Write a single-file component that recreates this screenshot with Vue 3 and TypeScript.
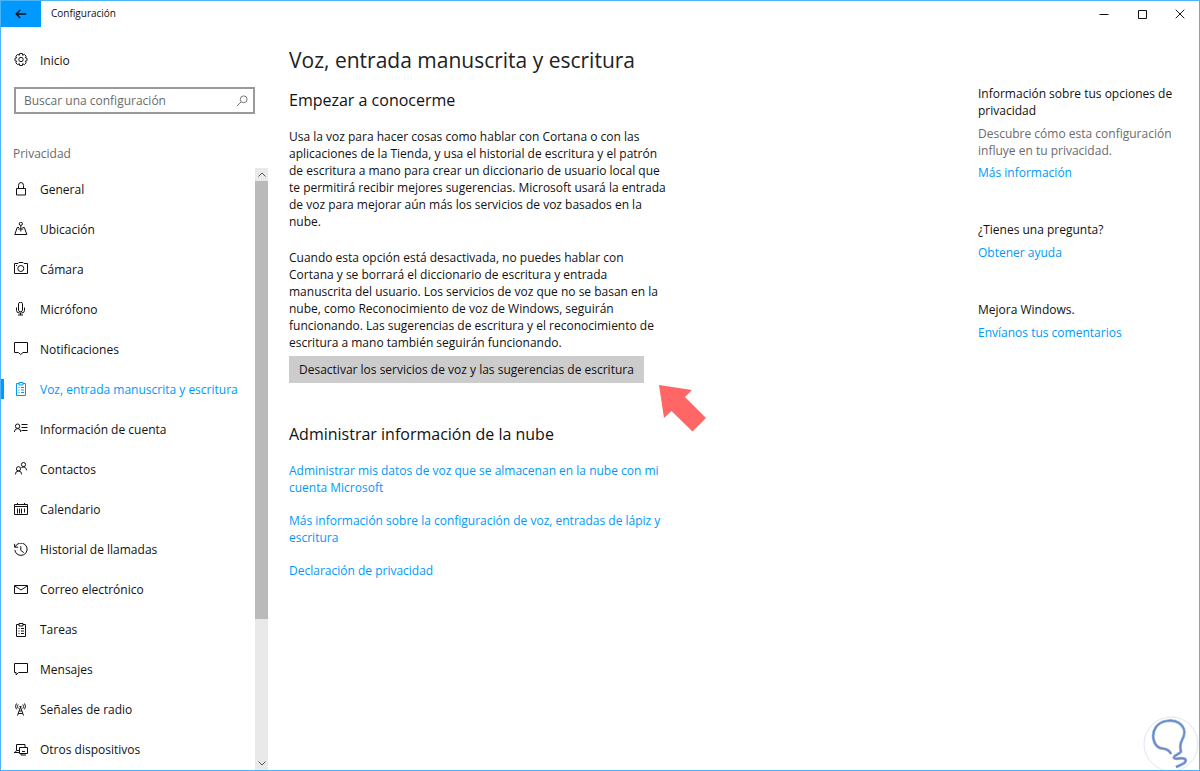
<script setup lang="ts">
import { ref } from 'vue'

interface NavItem {
  label: string
  icon: string
}

const clipboard =
  'M5 1.5H2.500v12h9v-12H9M5 .5h4v2.500H5zM4.500 5.500h1M7 5.500h3M4.500 8h1M7 8h3M4.500 10.500h1M7 10.500h3'

const items: NavItem[] = [
  { label: 'General', icon: 'M2.5 6.5h9v6.5h-9zM4.5 6.5V3.5a2.5 3 0 0 1 5 0v3' },
  { label: 'Ubicación', icon: 'M5 5.5H3.2L.8 12.5h12L10.4 5.5H8.6M6.8 3.3v6.2M4.3 7h5M5.2 1.8a1.6 1.6 0 1 0 3.2 0a1.6 1.6 0 1 0-3.2 0' },
  { label: 'Cámara', icon: 'M.5 1.5h3.5l1-1h4l1 1h3.5v10H.5zM3.8 6.5a3 3 0 1 0 6 0a3 3 0 1 0-6 0M2 3.5h1' },
  { label: 'Micrófono', icon: 'M4.5 1.8a2 1.5 0 0 1 4 0v6.4a2 1.5 0 0 1-4 0zM2.5 5.5v3a3 2.5 0 0 0 3 2.5h2a3 2.5 0 0 0 3-2.5v-3M6.5 11v2M4 13h5' },
  { label: 'Notificaciones', icon: 'M.5.5h13v10H9l-2.3 2-2.3-2H.5z' },
  { label: 'Voz, entrada manuscrita y escritura', icon: clipboard },
  { label: 'Información de cuenta', icon: 'M1.4 4.2a2.2 2.2 0 1 0 4.4 0a2.2 2.2 0 1 0-4.4 0M.4 10a3.2 3.4 0 0 1 6.4 0M7.5 2.5h6M7.5 5.5h6M7.5 8.5h6' },
  { label: 'Contactos', icon: 'M2.4 6.8a2.1 2.1 0 1 0 4.2 0a2.1 2.1 0 1 0-4.2 0M1.4 12.4a3.1 3.4 0 0 1 6.2 0M7.4 2.6a2.1 2.1 0 1 0 4.2 0a2.1 2.1 0 1 0-4.2 0M7.4 5.6a3.3 3.3 0 0 1 5.2 2.7' },
  { label: 'Calendario', icon: 'M.5 1.5h13v10H.5zM.5 3.5h13M3.5 0v2M10.5 0v2M3.5 5.5v5M5.5 5.5v5M7.5 5.5v5M10.5 5.5v4' },
  { label: 'Historial de llamadas', icon: 'M1.2 3.9A6.2 6.2 0 1 1 .8 7M.6.8v3.4h3.600M6.8 3.2v4.2l3 2.2' },
  { label: 'Correo electrónico', icon: 'M.5 2.5h13v8H.5zM.8 3l6.2 4 6.2-4' },
  { label: 'Tareas', icon: clipboard },
  { label: 'Mensajes', icon: 'M.5.5h13v9H4.700l-2.600 2.400V9.500H.5z' },
  { label: 'Señales de radio', icon: 'M6.5 4 3.500 12.500M6.500 4l3 8.500M5.200 8h2.600M4.400 10.500h4.200M5.500 3.500h2M4.200 1.500a3 3 0 0 0 0 4M8.800 1.500a3 3 0 0 1 0 4M2.500.5a5 5 0 0 0 0 5.800M10.500.5a5 5 0 0 1 0 5.800' },
  { label: 'Otros dispositivos', icon: 'M2.5 7.5v-6h8.500v3M0 9.500h5M1 9.500l1.500-2H5M5.500 4.500h8v6h-8zM8 8.500h3M7 10.500v1.500h5' },
]

const current = ref(5)
const query = ref('')
</script>

<template>
  <div class="window">
    <header class="titlebar">
      <button class="back" type="button" aria-label="Atrás">
        <svg width="12" height="10" viewBox="0 0 12 10"><path d="M1.2 5h10M5.2 1 1.2 5l4 4" stroke-width="1.4" /></svg>
      </button>
      <span class="caption">Configuración</span>
      <button class="sys" type="button" aria-label="Minimizar">
        <svg width="10" height="10" viewBox="0 0 10 10"><path d="M.5 5.500h9" /></svg>
      </button>
      <button class="sys" type="button" aria-label="Maximizar">
        <svg width="10" height="10" viewBox="0 0 10 10"><path d="M1.500 1.500h8v8h-8z" /></svg>
      </button>
      <button class="sys" type="button" aria-label="Cerrar">
        <svg width="10" height="10" viewBox="0 0 10 10"><path d="m.7.7 8.600 8.600M9.300.7.7 9.300" /></svg>
      </button>
    </header>

    <div class="body">
      <div class="sidebar">
        <a class="home" href="#">
          <svg class="icon" width="14" height="14" viewBox="0 0 14 14">
            <path d="M5.700.5h2.600l.4 1.800 1.600-1 1.900 1.900-1 1.600 1.800.4v2.600l-1.800.4 1 1.600-1.900 1.900-1.600-1-.4 1.800H5.700l-.4-1.800-1.600 1-1.900-1.900 1-1.600L1 7.800V5.200l1.800-.4-1-1.600 1.900-1.900 1.600 1z" />
            <circle cx="7" cy="6.500" r="2.200" />
          </svg>
          <span>Inicio</span>
        </a>
        <div class="search">
          <input v-model="query" type="text" placeholder="Buscar una configuración" aria-label="Buscar una configuración" />
          <svg width="12" height="12" viewBox="0 0 12 12"><circle cx="7.700" cy="4.300" r="3.400" /><path d="M5.200 6.800.8 11.200" /></svg>
        </div>
        <h2 class="group">Privacidad</h2>
        <div class="list">
          <nav>
            <a
              v-for="(item, i) in items"
              :key="item.label"
              href="#"
              :class="{ active: i === current }"
              @click.prevent="current = i"
            >
              <svg class="icon" width="14" height="14" viewBox="0 0 14 14"><path :d="item.icon" /></svg>
              <span>{{ item.label }}</span>
            </a>
          </nav>
          <div class="scrollbar">
            <button type="button" aria-label="Subir"><svg width="8" height="5" viewBox="0 0 8 5"><path d="m.5 4.500 3.500-3.500 3.500 3.500" /></svg></button>
            <div class="thumb"></div>
            <div class="rest"></div>
            <button type="button" aria-label="Bajar"><svg width="8" height="5" viewBox="0 0 8 5"><path d="M.5.5 4 4 7.500.5" /></svg></button>
          </div>
        </div>
      </div>

      <main>
        <h1>Voz, entrada manuscrita y escritura</h1>
        <h2>Empezar a conocerme</h2>
        <p>
          Usa la voz para hacer cosas como hablar con Cortana o con las aplicaciones de la Tienda, y usa el
          historial de escritura y el patrón de escritura a mano para crear un diccionario de usuario local que
          te permitirá recibir mejores sugerencias. Microsoft usará la entrada de voz para mejorar aún más los
          servicios de voz basados en la nube.
        </p>
        <p>
          Cuando esta opción está desactivada, no puedes hablar con Cortana y se borrará el diccionario de
          escritura y entrada manuscrita del usuario. Los servicios de voz que no se basan en la nube, como
          Reconocimiento de voz de Windows, seguirán funcionando. Las sugerencias de escritura y el
          reconocimiento de escritura a mano también seguirán funcionando.
        </p>
        <div class="action">
          <button type="button">Desactivar los servicios de voz y las sugerencias de escritura</button>
          <svg class="pointer" width="48" height="48" viewBox="0 0 48 48">
            <path d="M0 0 33 5l-7 7 21 21-13.500 13.500L12.500 26 5 33z" />
          </svg>
        </div>
        <h2>Administrar información de la nube</h2>
        <ul>
          <li><a href="#">Administrar mis datos de voz que se almacenan en la nube con mi cuenta Microsoft</a></li>
          <li><a href="#">Más información sobre la configuración de voz, entradas de lápiz y escritura</a></li>
          <li><a href="#">Declaración de privacidad</a></li>
        </ul>
      </main>

      <aside>
        <section>
          <h3>Información sobre tus opciones de privacidad</h3>
          <p>Descubre cómo esta configuración influye en tu privacidad.</p>
          <a href="#">Más información</a>
        </section>
        <section>
          <h3>¿Tienes una pregunta?</h3>
          <a href="#">Obtener ayuda</a>
        </section>
        <section>
          <h3>Mejora Windows.</h3>
          <a href="#">Envíanos tus comentarios</a>
        </section>
      </aside>
    </div>

    <svg class="badge" width="56" height="54" viewBox="0 0 56 54" aria-hidden="true">
      <circle class="ring" cx="28" cy="28" r="27" />
      <path class="glow" d="M28 38C26 33 22 33 17 32C10 29 8 18 13 11C18 4 30 3 36 7C43 12 42 19 39 24C37 28 37 32 38 35C38 38 30 39 31 42C32 44 39 41 42 43C45 47 37 49 33 51" />
      <path class="bulb" d="M28 38C26 33 22 33 17 32C10 29 8 18 13 11C18 4 30 3 36 7C43 12 42 19 39 24C37 28 37 32 38 35C38 38 30 39 31 42C32 44 39 41 42 43C45 47 37 49 33 51" />
    </svg>
  </div>
</template>

<style>
body {
  margin: 0;
  background: #fff;
}
</style>

<style scoped>
.window {
  position: relative;
  box-sizing: border-box;
  display: flex;
  flex-direction: column;
  min-height: 100vh;
  border: 1px solid #4ab4f8;
  background: #fff;
  color: #111;
  font: 12px/17px "Open Sans", "Noto Sans", sans-serif;
}
svg {
  fill: none;
  stroke: currentColor;
  flex: none;
}
a {
  color: #0099f8;
  text-decoration: none;
}
button {
  margin: 0;
  padding: 0;
  border: 0;
  background: none;
  color: inherit;
  font: inherit;
}
h1,
h2,
h3,
p,
ul {
  margin: 0;
  padding: 0;
  font-weight: 400;
}
.titlebar {
  display: flex;
  align-items: stretch;
  height: 26px;
}
.back,
.sys {
  display: flex;
  align-items: center;
  justify-content: center;
}
.back {
  width: 40px;
  background: #0099ff;
}
.caption {
  flex: 1;
  padding-left: 10px;
  font-size: 10px;
  line-height: 24px;
}
.sys {
  width: 38px;
}
.body {
  flex: 1;
  display: flex;
}
.sidebar {
  display: flex;
  flex-direction: column;
  width: 268px;
  flex: none;
}
.home {
  display: flex;
  align-items: center;
  gap: 12px;
  height: 24px;
  margin: 21px 0 15px;
  padding-left: 13px;
  color: #111;
}
.search {
  display: flex;
  align-items: center;
  box-sizing: border-box;
  height: 27px;
  margin: 0 14px 0 13px;
  padding: 0 5px 0 8px;
  border: 2px solid #999;
  color: #777;
}
.search input {
  flex: 1;
  min-width: 0;
  padding: 0;
  border: 0;
  outline: 0;
  background: none;
  color: #111;
  font: inherit;
}
.search input::placeholder {
  color: #6b6b6b;
  opacity: 1;
}
.group {
  margin: 31px 0 6px 12px;
  font-size: 12px;
  color: #6b6b6b;
}
.list {
  flex: 1;
  display: flex;
}
nav {
  flex: 1;
  display: grid;
  grid-auto-rows: 1fr;
  padding-top: 1px;
}
nav a {
  position: relative;
  display: flex;
  align-items: center;
  gap: 12px;
  padding-left: 13px;
  color: #111;
}
nav a.active {
  color: #0099f8;
}
nav a.active::before {
  content: "";
  position: absolute;
  left: 0;
  width: 3px;
  height: 20px;
  background: #0099ff;
}
.scrollbar {
  display: flex;
  flex-direction: column;
  width: 13px;
  margin-right: 1px;
  background: #e9e9e9;
  color: #555;
}
.scrollbar button {
  display: flex;
  align-items: center;
  justify-content: center;
  height: 13px;
}
.thumb {
  flex: 76;
  background: #bababa;
}
.rest {
  flex: 24;
}
main {
  flex: 1;
  padding: 17px 20px 20px;
}
h1 {
  font-size: 21px;
  line-height: 32px;
  color: #222;
}
main h2 {
  margin: 12px 0 16px;
  font-size: 16px;
  line-height: 24px;
}
main p,
main ul {
  max-width: 378px;
}
main p + p {
  margin-top: 19px;
}
.action {
  position: relative;
  width: max-content;
  margin: 5px 0 39px;
}
.action button {
  display: block;
  height: 27px;
  padding: 0 10px;
  background: #ccc;
}
.pointer {
  position: absolute;
  left: calc(100% + 15px);
  top: 29px;
  fill: #ff6666;
  stroke: none;
}
ul {
  list-style: none;
}
li + li {
  margin-top: 16px;
}
aside {
  box-sizing: border-box;
  width: 221px;
  flex: none;
  padding: 58px 20px 0 0;
}
section + section {
  margin-top: 40px;
}
h3 {
  margin-bottom: 6px;
  font-size: 12px;
}
aside p {
  margin-bottom: 5px;
  color: #6b6b6b;
}
aside a {
  display: block;
}
.badge {
  position: absolute;
  right: 0;
  bottom: 0;
}
.ring {
  stroke: #dfe5ef;
  fill: #fff;
}
.glow {
  stroke: #8dbbe0;
  stroke-width: 3;
}
.bulb {
  stroke: #7382c4;
  stroke-width: 1.5;
}
</style>
